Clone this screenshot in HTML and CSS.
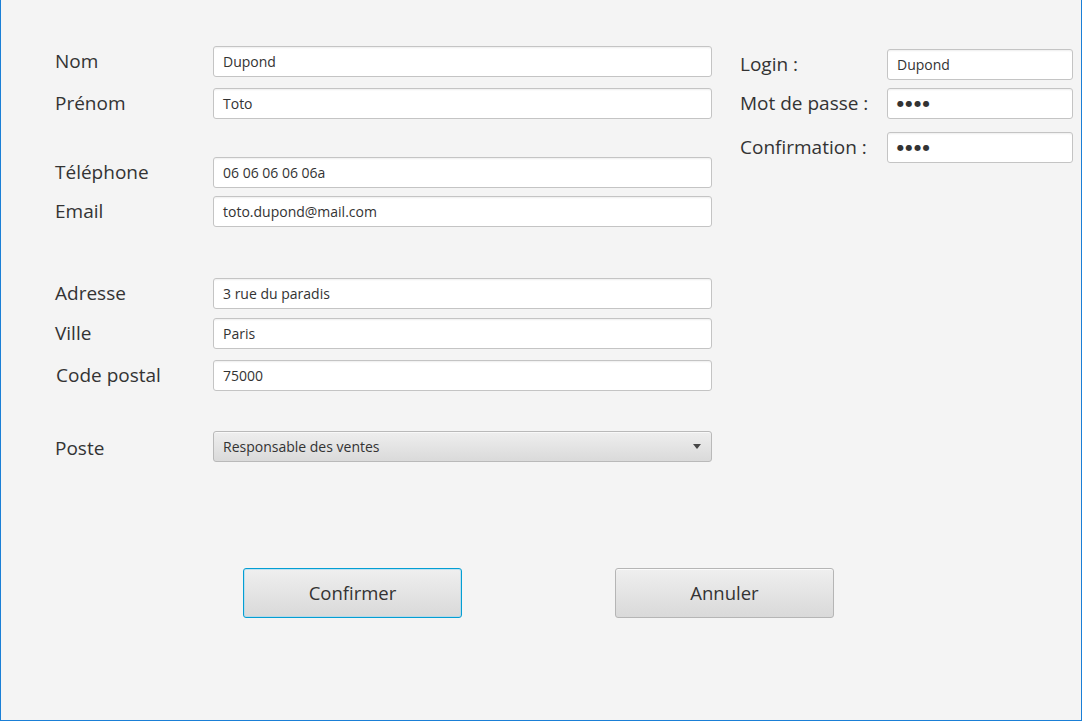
FILE: index.html
```html
<!DOCTYPE html>
<html lang="fr">
<head>
<meta charset="utf-8">
<title>Employé</title>
<link rel="stylesheet" href="styles.css">
</head>
<body>
<div class="window">
  <div class="main">
    <div class="form form-left">
      <div class="group gap-11">
        <div class="row"><span class="label">Nom</span><div class="field">Dupond</div></div>
        <div class="row"><span class="label">Prénom</span><div class="field">Toto</div></div>
      </div>
      <div class="group gap-8 mt-38">
        <div class="row"><span class="label">Téléphone</span><div class="field">06 06 06 06 06a</div></div>
        <div class="row"><span class="label">Email</span><div class="field">toto.dupond@mail.com</div></div>
      </div>
      <div class="group mt-51">
        <div class="row"><span class="label">Adresse</span><div class="field">3 rue du paradis</div></div>
        <div class="row mt-9"><span class="label">Ville</span><div class="field">Paris</div></div>
        <div class="row mt-11"><span class="label label-shift">Code postal</span><div class="field">75000</div></div>
      </div>
      <div class="group mt-40">
        <div class="row"><span class="label label-low">Poste</span><div class="combo"><span>Responsable des ventes</span><span class="arrow"></span></div></div>
      </div>
    </div>
    <div class="form form-right">
      <div class="row row-right"><span class="label">Login :</span><div class="field">Dupond</div></div>
      <div class="row row-right mt-8"><span class="label">Mot de passe :</span><div class="field pwd">●●●●</div></div>
      <div class="row row-right mt-13"><span class="label">Confirmation :</span><div class="field pwd">●●●●</div></div>
    </div>
  </div>
  <div class="actions">
    <button class="btn btn-focus">Confirmer</button>
    <button class="btn">Annuler</button>
  </div>
</div>
</body>
</html>
```

FILE: styles.css
```css
* { box-sizing: border-box; }
html, body { margin: 0; padding: 0; }
body {
  background: #f4f4f4;
  font-family: "Open Sans", "Noto Sans", sans-serif;
  color: #333333;
}
.window {
  width: 1082px;
  height: 721px;
  border-left: 1px solid #1a7fd6;
  border-right: 1px solid #1a7fd6;
  border-bottom: 1px solid #1a7fd6;
  background: #f4f4f4;
}
.main {
  display: flex;
  align-items: flex-start;
  padding-top: 46px;
}
.form-left {
  display: flex;
  flex-direction: column;
  padding-left: 54px;
}
.group { display: flex; flex-direction: column; }
.gap-8 { gap: 8px; }
.gap-11 { gap: 11px; }
.mt-8 { margin-top: 8px; }
.mt-9 { margin-top: 9px; }
.mt-11 { margin-top: 11px; }
.mt-13 { margin-top: 13px; }
.mt-38 { margin-top: 38px; }
.mt-40 { margin-top: 40px; }
.mt-51 { margin-top: 51px; }
.row {
  display: grid;
  grid-template-columns: 158px 499px;
  align-items: center;
  height: 31px;
}
.label {
  font-size: 19px;
  line-height: 24px;
  padding-bottom: 2px;
  color: #333333;
  white-space: nowrap;
}
.label-shift { padding-left: 1px; }
.label-low { padding-top: 2px; padding-bottom: 0; }
.field {
  height: 31px;
  background: #ffffff;
  border: 1px solid #c4c4c4;
  border-radius: 3px;
  box-shadow: inset 0 2px 2px -1px rgba(0, 0, 0, 0.07);
  font-size: 14px;
  line-height: 29px;
  padding-left: 9px;
  color: #333333;
  white-space: nowrap;
  overflow: hidden;
}
.pwd {
  font-family: "DejaVu Sans", sans-serif;
  font-size: 8px;
  letter-spacing: 1.6px;
  color: #333333;
}
.combo {
  height: 31px;
  display: flex;
  align-items: center;
  justify-content: space-between;
  padding: 0 10px 0 9px;
  border: 1px solid #b9b9b9;
  border-radius: 3px;
  background: linear-gradient(to bottom, #eeeeee 0%, #e2e2e2 60%, #dadada 100%);
  box-shadow: inset 0 1px 0 rgba(255, 255, 255, 0.6);
  font-size: 14px;
  color: #333333;
}
.arrow {
  width: 0;
  height: 0;
  border-left: 4.5px solid transparent;
  border-right: 4.5px solid transparent;
  border-top: 5px solid #474747;
}
.form-right {
  display: flex;
  flex-direction: column;
  margin-left: 28px;
  margin-top: 3px;
}
.row-right { grid-template-columns: 147px 186px; }
.actions {
  display: flex;
  gap: 153px;
  padding-left: 242px;
  margin-top: 106px;
}
.btn {
  width: 219px;
  height: 50px;
  border: 1px solid #b5b5b5;
  border-radius: 3px;
  background: linear-gradient(to bottom, #efefef 0%, #e3e3e3 55%, #d9d9d9 100%);
  box-shadow: inset 0 1px 0 rgba(255, 255, 255, 0.7);
  font-family: "Open Sans", "Noto Sans", sans-serif;
  font-size: 18.5px;
  color: #333333;
  padding: 0 0 2px 0;
  margin: 0;
}
.btn-focus {
  border-color: #039ed3;
  box-shadow: inset 0 0 0 1px rgba(160, 215, 240, 0.6);
}
```
